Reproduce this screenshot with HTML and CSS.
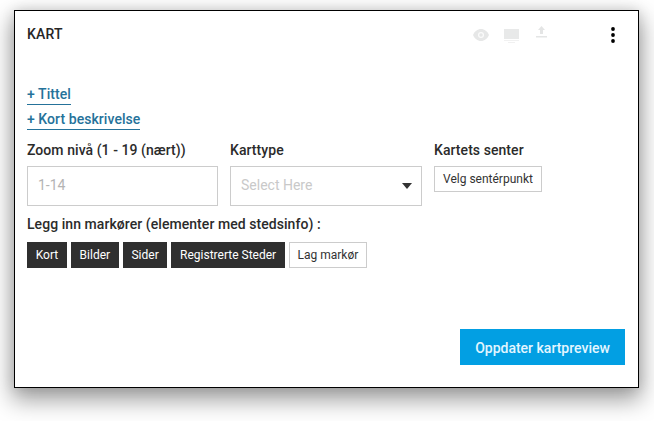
FILE: index.html
```html
<!DOCTYPE html>
<html lang="no">
<head>
<meta charset="utf-8">
<title>Kart</title>
<link rel="stylesheet" href="styles.css">
</head>
<body>
<section class="card">
  <header class="head">
    <h2 class="title">KART</h2>
    <div class="tools">
      <svg class="tool tool-eye" width="16" height="12" viewBox="0 0 16 12"><path fill="#e6e7e7" d="M8 0C4.500 0 1.500 2.400 0 6c1.500 3.600 4.500 6 8 6s6.500-2.400 8-6c-1.500-3.600-4.500-6-8-6z"/><circle cx="8" cy="6" r="3" fill="#fbfbfb"/><circle cx="8" cy="6" r="1.800" fill="#e6e7e7"/></svg>
      <svg class="tool tool-screen" width="15" height="14" viewBox="0 0 15 14"><path fill="#e8e9e9" d="M0 0h15v10H0z"/><path fill="#f1f1f1" d="M0 11h15v1H0zM4 13h7v1H4z"/></svg>
      <svg class="tool tool-up" width="11" height="12" viewBox="0 0 11 12"><path fill="#e4e5e5" d="M5.500 0 9 4H7v4H4V4H2zM0 10h11v1.500H0z"/></svg>
    </div>
    <svg class="more" width="4" height="16" viewBox="0 0 4 16"><circle cx="2" cy="2" r="1.900"/><circle cx="2" cy="8" r="1.900"/><circle cx="2" cy="14" r="1.900"/></svg>
  </header>
  <div class="links">
    <a class="link">+ Tittel</a>
    <a class="link">+ Kort beskrivelse</a>
  </div>
  <div class="fields">
    <div class="field field-zoom">
      <label class="label">Zoom nivå (1 - 19 (nært))</label>
      <div class="input">1-14</div>
    </div>
    <div class="field field-type">
      <label class="label">Karttype</label>
      <div class="input select"><span class="placeholder">Select Here</span><span class="caret"></span></div>
    </div>
    <div class="field field-center">
      <label class="label">Kartets senter</label>
      <button class="btn btn-light btn-center">Velg sentérpunkt</button>
    </div>
  </div>
  <p class="label markers-label">Legg inn markører (elementer med stedsinfo) :</p>
  <div class="markers">
    <button class="btn btn-dark">Kort</button>
    <button class="btn btn-dark">Bilder</button>
    <button class="btn btn-dark">Sider</button>
    <button class="btn btn-dark">Registrerte Steder</button>
    <button class="btn btn-light">Lag markør</button>
  </div>
  <div class="footer">
    <button class="update">Oppdater kartpreview</button>
  </div>
</section>
</body>
</html>
```
FILE: styles.css
```css
* { box-sizing: border-box; }
html, body { margin: 0; height: 421px; overflow: hidden; background: #fff; }
body { padding: 10px 0 0 14px; font-family: Roboto, "Liberation Sans", sans-serif; color: #2b2b2b; }
.card {
  width: 625px; height: 378px; background: #fff; border: 1px solid #000;
  padding: 0 13px 0 12px; display: flex; flex-direction: column;
  box-shadow: 0 10px 22px 2px rgba(0,0,0,.38), 0 0 12px rgba(0,0,0,.12);
}
.head { display: flex; align-items: flex-start; height: 73px; position: relative; }
.title { margin: 15px 0 0; font-size: 14px; line-height: 17px; font-weight: 500; letter-spacing: .2px; color: #262626; }
.tools { position: absolute; left: 446px; top: 15px; display: flex; align-items: flex-start; }
.tool { display: block; }
.tool-eye { margin-top: 3px; }
.tool-screen { margin: 3px 17px 0 15px; }
.more { position: absolute; left: 584px; top: 16px; fill: #000; }
.links { display: flex; flex-direction: column; align-items: flex-start; gap: 4px; }
.link { font-size: 14px; line-height: 20px; font-weight: 500; letter-spacing: .06px; color: #25729a; border-bottom: 1px solid #25729a; height: 21px; }
.fields { display: flex; margin-top: 12px; }
.field { display: flex; flex-direction: column; }
.field-zoom { width: 191px; margin-right: 12px; }
.field-type { width: 192px; margin-right: 12px; }
.label { font-size: 14px; line-height: 17px; font-weight: 500; letter-spacing: .06px; color: #2b2b2b; margin: 0; }
.field .label { margin-bottom: 7px; }
.input {
  height: 40px; border: 1px solid #ccc; padding: 0 10px; font-size: 14px; line-height: 36px;
  color: #b4b4b4; background: #fff;
}
.select { display: flex; justify-content: space-between; align-items: center; padding-right: 9px; color: #c9c9c9; }
.placeholder { margin-bottom: 2px; }
.caret { width: 0; height: 0; border: 5.500px solid transparent; border-top: 6px solid #333; border-bottom: 0; }
.btn {
  height: 26px; padding: 0 7.700px; font: 400 12px/24px Roboto, "Liberation Sans", sans-serif;
  border: 1px solid #ccc; border-radius: 0; white-space: nowrap; cursor: pointer;
}
.btn-light { background: #fff; color: #333; }
.btn-dark { background: #2f2f2f; color: #fff; border-color: #2f2f2f; }
.btn-center { align-self: flex-start; padding: 0 8px; }
.markers-label { margin-top: 10px; }
.markers { display: flex; gap: 4px; margin-top: 9px; }
.footer { margin-top: auto; margin-bottom: 22px; display: flex; justify-content: flex-end; }
.update {
  width: 165px; height: 36px; border: 0; background: #029fe3; color: #e3f6ff;
  font: 500 14px/36px Roboto, "Liberation Sans", sans-serif; cursor: pointer;
}
```
